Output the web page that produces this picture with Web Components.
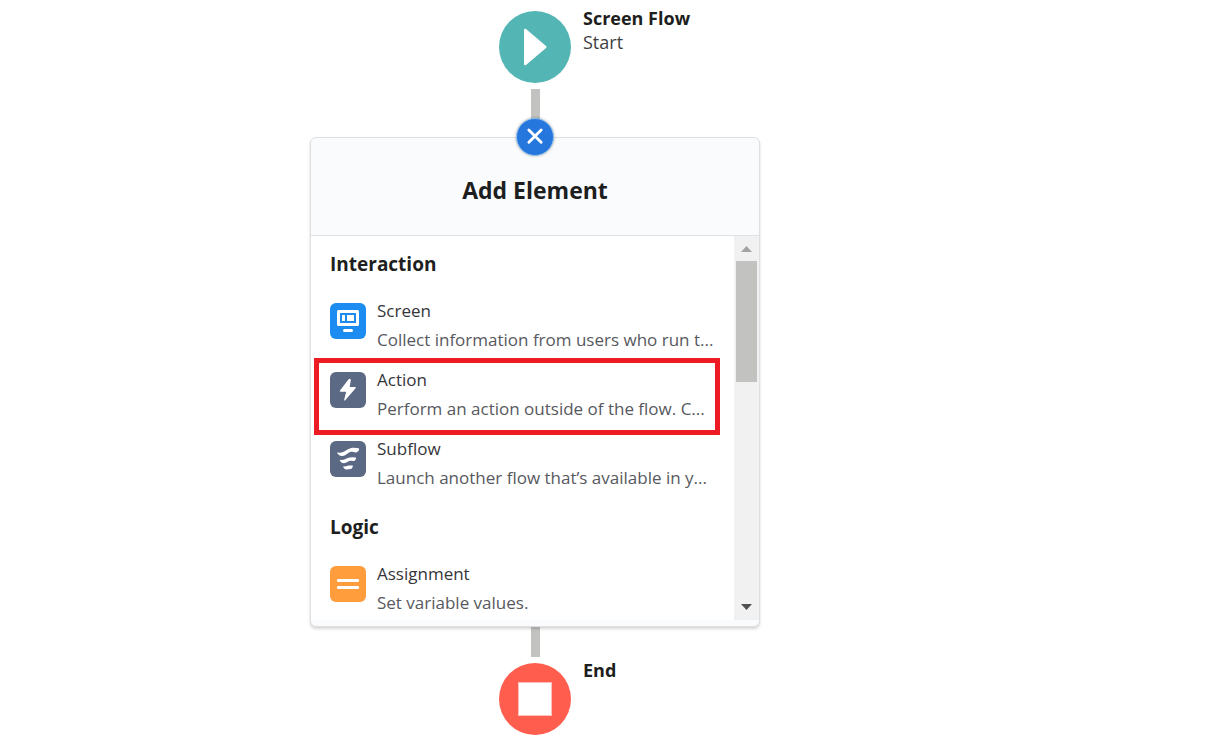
<!DOCTYPE html>
<html lang="en">
<head>
<meta charset="utf-8">
<meta name="viewport" content="width=device-width, initial-scale=1">
<title>Flow Builder</title>
<style>
  body {
    margin: 0;
    background: #fff;
    color: #1d1e20;
    font-family: "Open Sans", "Noto Sans", sans-serif;
    font-size: 18px;
  }
</style>
</head>
<body>
<flow-canvas>
  <flow-node kind="start">
    <strong>Screen Flow</strong>
    <span>Start</span>
  </flow-node>
  <flow-connector></flow-connector>
  <element-picker heading="Add Element">
    <element-group heading="Interaction">
      <element-item icon="screen" name="Screen">Collect information from users who run t...</element-item>
      <element-item icon="action" name="Action" highlighted>Perform an action outside of the flow. C...</element-item>
      <element-item icon="subflow" name="Subflow">Launch another flow that’s available in y...</element-item>
    </element-group>
    <element-group heading="Logic">
      <element-item icon="assignment" name="Assignment">Set variable values.</element-item>
    </element-group>
  </element-picker>
  <flow-connector></flow-connector>
  <flow-node kind="end">
    <strong>End</strong>
  </flow-node>
</flow-canvas>

<script>
const icons = {
  start: '<svg viewBox="0 0 72 72"><path fill="#fff" d="M25 19q0-2 2-1l20 17q1 1 0 2L27 54q-2 1-2-1z"/></svg>',
  end: '<svg viewBox="0 0 72 72"><rect x="19.500" y="19.500" width="33" height="33" fill="#fff" stroke="#ffc1ba"/></svg>',
  screen: `<svg viewBox="0 0 36 36"><g fill="#fff">
    <path fill-rule="evenodd" d="M8.500 7h19a1.500 1.500 0 0 1 1.500 1.500v13a1.500 1.500 0 0 1-1.500 1.500h-19A1.500 1.500 0 0 1 7 21.500v-13A1.500 1.500 0 0 1 8.500 7zM10 10v10h16V10z"/>
    <rect x="12" y="12" width="3" height="6"/><rect x="17" y="12" width="7" height="6"/>
    <rect x="13" y="26" width="10" height="3" rx="1.500"/></g></svg>`,
  action: '<svg viewBox="0 0 36 36"><path fill="#fff" d="M18.400 7.400 10 18.600q-.8 1.100.6 1.100h5.600l-2 7.800q-.3 1.900 1 .7l10.400-12q.9-1.200-.6-1.200h-5.300l1.100-7q0-2-2.400-.6z"/></svg>',
  subflow: `<svg viewBox="0 0 36 36"><g fill="#fff">
    <path d="M7 11.200C12.500 13 15.500 9.500 18.500 8c3.500-1.800 7-1.300 10-.8.800.4.800 1.200.3 2-.8 1.400-1.800 2.300-3.300 2.200-2.500-.4-4.500-1.400-7.500.8-2.500 1.800-4.500 3.300-7.500 2.500-1.700-.5-2.900-1.800-3.500-3.500z"/>
    <path d="M9.600 18.800c3.600.9 5.600-.5 8-1.700 2.500-1.100 5-1.100 7.800-.6.800.3.800 1 .4 1.700-.6 1.200-1.400 1.900-2.600 1.900-2-.2-3.200-.7-5.400.6-1.800 1.100-3.300 1.800-5.300 1.300-1.400-.4-2.400-1.600-2.900-3.200z"/>
    <path d="M13 25.400c2 .4 3.200-.2 4.700-.7 1.500-.4 3-.4 4.600-.1.700.2.700.8.400 1.300-.6 1.100-1.300 2-2.400 2.200-1.500 0-2.800.6-4 .4-1.600-.3-2.700-1.600-3.300-3.100z"/></g></svg>`,
  assignment: '<svg viewBox="0 0 36 36"><rect x="7" y="13" width="22" height="3" rx="1" fill="#fff"/><rect x="7" y="20" width="22" height="3" rx="1" fill="#fff"/></svg>',
  close: '<svg viewBox="0 0 38 38"><path fill="none" stroke="#fff" stroke-width="3" stroke-linecap="round" d="M12.500 11.500l13 13m0-13l-13 13"/></svg>'
}

window.customElements.define('flow-canvas', class extends HTMLElement {
  constructor() {
    super()
    this.attachShadow({mode: 'open'})
    this.shadowRoot.innerHTML = `
      <style>
        :host {
          display: flex;
          flex-direction: column;
          align-items: center;
          /* the flow sits a little left of the middle of the canvas */
          padding: 11px 135px 11px 0;
        }
      </style>
      <slot></slot>
    `
  }
})

window.customElements.define('flow-node', class extends HTMLElement {
  constructor() {
    super()
    this.attachShadow({mode: 'open'})
  }

  connectedCallback() {
    this.shadowRoot.innerHTML = `
      <style>
        :host {
          display: grid;
          grid-template-columns: 1fr 72px 1fr;
          column-gap: 12px;
          align-self: stretch;
          line-height: 24px;
        }
        .circle {
          grid-column: 2;
          height: 72px;
          border-radius: 50%;
          background: #54b5b5;
        }
        :host([kind="end"]) .circle { background: #ff5d4d; }
        svg { display: block; }
        .label {
          display: flex;
          flex-direction: column;
          margin-top: -5px;
        }
        ::slotted(span) { color: #3e3f42; }
      </style>
      <div class="circle">${icons[this.getAttribute('kind')]}</div>
      <div class="label"><slot></slot></div>
    `
  }
})

window.customElements.define('flow-connector', class extends HTMLElement {
  constructor() {
    super()
    this.attachShadow({mode: 'open'})
    this.shadowRoot.innerHTML = `
      <style>
        :host { display: block; width: 9px; }
        :host(:first-of-type) { padding-top: 6px; padding-bottom: 18px; }
        :host(:last-of-type) { padding-bottom: 6px; }
        div { height: 30px; background: #c2c2c0; }
      </style>
      <div></div>
    `
  }
})

window.customElements.define('element-picker', class extends HTMLElement {
  constructor() {
    super()
    this.attachShadow({mode: 'open'})
  }

  connectedCallback() {
    this.shadowRoot.innerHTML = `
      <style>
        :host {
          display: block;
          position: relative;
          box-sizing: border-box;
          width: 450px;
          max-width: 100%;
          padding-bottom: 6px;
          border: 1px solid #dddfe1;
          border-radius: 6px;
          background: #fafbfd;
          box-shadow: 0 2px 3px rgba(0, 0, 0, .16);
        }
        button {
          position: absolute;
          top: -20px;
          left: calc(50% - 19px);
          width: 38px;
          height: 38px;
          padding: 0;
          border: 1px solid #8fc0ee;
          border-radius: 50%;
          background: #2577de;
          box-shadow: 0 0 3px rgba(0, 0, 0, .3);
        }
        svg { display: block; }
        header {
          padding: 36px 0 29px;
          border-bottom: 1px solid #e0e2e5;
          text-align: center;
        }
        h2 { margin: 0; font-size: 23px; line-height: 32px; }
        .body { display: flex; height: 384px; background: #fff; }
        .list {
          flex: 1;
          min-width: 0;
          overflow: hidden;
          padding: 14px 14px 0 19px;
        }
      </style>
      <button aria-label="Close">${icons.close}</button>
      <header><h2>${this.getAttribute('heading')}</h2></header>
      <div class="body">
        <div class="list"><slot></slot></div>
        <scroll-track></scroll-track>
      </div>
    `
  }
})

window.customElements.define('scroll-track', class extends HTMLElement {
  constructor() {
    super()
    this.attachShadow({mode: 'open'})
    this.shadowRoot.innerHTML = `
      <style>
        :host {
          display: flex;
          flex-direction: column;
          width: 25px;
          background: #f1f1f1;
        }
        svg { display: block; height: 25px; }
        div { height: 121px; margin: 0 2px auto; background: #c2c2c0; }
      </style>
      <svg viewBox="0 0 25 25"><path fill="#a3a3a3" d="M7 16l5.500-6 5.500 6z"/></svg>
      <div></div>
      <svg viewBox="0 0 25 25"><path fill="#505050" d="M7 9h11l-5.500 6z"/></svg>
    `
  }
})

window.customElements.define('element-group', class extends HTMLElement {
  constructor() {
    super()
    this.attachShadow({mode: 'open'})
  }

  connectedCallback() {
    this.shadowRoot.innerHTML = `
      <style>
        :host { display: block; margin-bottom: 10px; }
        h3 { margin: 0 0 17px; font-size: 19px; line-height: 29px; }
      </style>
      <h3>${this.getAttribute('heading')}</h3>
      <slot></slot>
    `
  }
})

window.customElements.define('element-item', class extends HTMLElement {
  constructor() {
    super()
    this.attachShadow({mode: 'open'})
  }

  connectedCallback() {
    const icon = this.getAttribute('icon')
    this.shadowRoot.innerHTML = `
      <style>
        :host {
          display: block;
          position: relative;
          font-size: 17px;
          line-height: 29px;
        }
        :host([highlighted])::after {
          content: "";
          position: absolute;
          inset: -7px 0 -1px -16px;
          border: 5px solid #ed1c24;
          pointer-events: none;
        }
        button {
          display: flex;
          align-items: flex-start;
          gap: 11px;
          width: 100%;
          padding: 0 0 11px;
          border: 0;
          background: none;
          font: inherit;
          text-align: left;
          white-space: nowrap;
        }
        .icon {
          flex: none;
          width: 36px;
          height: 36px;
          margin-top: 7px;
          border-radius: 6px;
          background: #5c6985;
        }
        .screen { background: #1c8cf0; }
        .assignment { background: #ff9d3d; }
        svg, .name, .about { display: block; }
        .name { color: #35363a; }
        .about { color: #57595e; }
      </style>
      <button>
        <span class="icon ${icon}">${icons[icon]}</span>
        <span>
          <span class="name">${this.getAttribute('name')}</span>
          <span class="about"><slot></slot></span>
        </span>
      </button>
    `
  }
})
</script>
</body>
</html>
